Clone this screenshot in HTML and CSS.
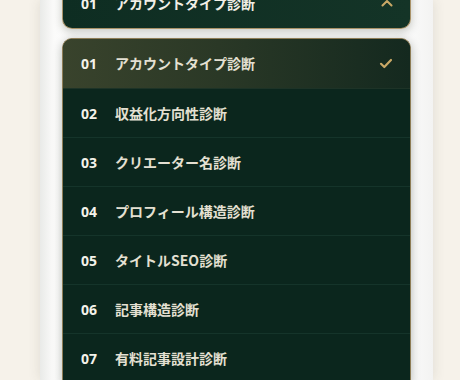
FILE: index.html
```html
<!DOCTYPE html>
<html lang="ja">
<head>
  <meta charset="UTF-8">
  <title>診断メニュー</title>
  <link rel="stylesheet" href="styles.css">
</head>
<body>
  <div class="card">
    <!-- Select trigger -->
    <button class="trigger" type="button">
      <span class="num">01</span>
      <span class="label">アカウントタイプ診断</span>
      <svg class="chev" width="12" height="8" viewBox="0 0 12 8"><path d="M1.5 6.5 L6 2 L10.5 6.5" fill="none" stroke="#c9a866" stroke-width="2" stroke-linecap="round" stroke-linejoin="round"/></svg>
    </button>

    <!-- Options -->
    <ul class="menu">
      <li class="item active">
        <span class="num">01</span>
        <span class="label">アカウントタイプ診断</span>
        <svg class="check" width="14" height="11" viewBox="0 0 14 11"><path d="M2 5.8 L5.3 9 L12 2" fill="none" stroke="#c9a866" stroke-width="2.2" stroke-linecap="round" stroke-linejoin="round"/></svg>
      </li>
      <li class="item"><span class="num">02</span><span class="label">収益化方向性診断</span></li>
      <li class="item"><span class="num">03</span><span class="label">クリエーター名診断</span></li>
      <li class="item"><span class="num">04</span><span class="label">プロフィール構造診断</span></li>
      <li class="item"><span class="num">05</span><span class="label">タイトルSEO診断</span></li>
      <li class="item"><span class="num">06</span><span class="label">記事構造診断</span></li>
      <li class="item"><span class="num">07</span><span class="label">有料記事設計診断</span></li>
    </ul>
  </div>
</body>
</html>
```

FILE: styles.css
```css
html, body {margin:0; padding:0; height:100%; overflow:hidden;}
body {background:#f6f2ea; font-family:"Noto Sans", "Noto Sans CJK JP", sans-serif;}
.card {display:flex; flex-direction:column; margin:0 27px 0 40px; height:100%; padding:0 22px; box-sizing:border-box; background:linear-gradient(90deg, #e9eae8 0, #fbfbfa 14px, #fff 40px, #fff 90%, #f3f3f2 100%); box-shadow:0 0 12px rgba(60,55,40,0.12);}
.trigger {display:flex; align-items:center; flex:0 0 auto; width:100%; height:51px; margin:-22px 0 0; padding:0 18px; box-sizing:border-box; border:1px solid #a99268; border-top:none; border-radius:0 0 10px 10px; background:linear-gradient(90deg, #0e2d22, #143427); color:#f2efe6; font-family:inherit; text-align:left; box-shadow:0 3px 8px rgba(30,40,20,0.25);}
.menu {flex:1 0 auto; list-style:none; margin:9px 0 0; padding:0; border:1px solid #8d7c55; border-bottom:none; border-radius:10px 10px 0 0; overflow:hidden; background:#0b261d; box-shadow:0 2px 10px rgba(20,30,20,0.3);}
.item {display:flex; align-items:center; height:48px; padding:0 18px; border-bottom:1px solid #15342a; color:#e4e0d2;}
.item.active {height:48px; padding-bottom:1px; background:linear-gradient(90deg, #39432c 0, #2a3826 45%, #14291f 100%); border-bottom-color:#1d3327;}
.num {width:34px; flex:0 0 34px; font-size:14px; font-weight:700; color:#f4f2ea;}
.label {flex:1; font-size:14px; font-weight:700; font-family:"Noto Sans CJK JP", sans-serif;}
.chev, .check {flex:0 0 auto; margin-right:-1px;}
```
